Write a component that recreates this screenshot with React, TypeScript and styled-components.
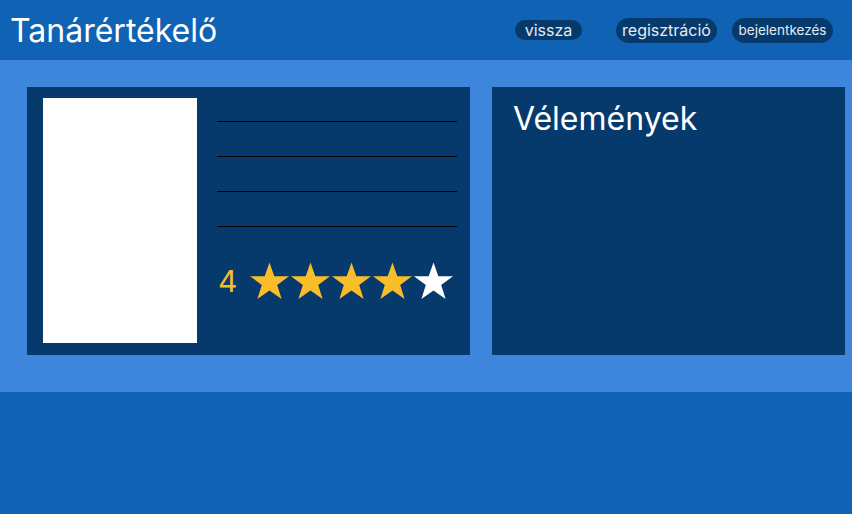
import React from "react";
import styled, { createGlobalStyle } from "styled-components";

const Global = createGlobalStyle`
  html, body { margin: 0; padding: 0; background: #0f62b4; }
  body { font-family: Inter, "Noto Sans", sans-serif; }
  * { box-sizing: border-box; }
`;

const Header = styled.header`
  height: 60px;
  background: #0f62b4;
  display: flex;
  align-items: center;
  padding: 0 19px 0 10px;
`;

const Title = styled.h1`
  margin: 0;
  flex: 1;
  font-size: 32px;
  font-weight: 400;
  color: #ffffff;
  line-height: 1;
  position: relative;
  top: 1px;
`;

const Nav = styled.nav`
  display: flex;
  align-items: center;
`;

const Pill = styled.button<{ $h: number; $fs: number; $w: number; $ml: number }>`
  height: ${(p) => p.$h}px;
  width: ${(p) => p.$w}px;
  margin-left: ${(p) => p.$ml}px;
  padding: 0;
  border: none;
  border-radius: 999px;
  background: #063a6d;
  color: #e6ebf2;
  font-family: Inter, "Noto Sans", sans-serif;
  font-size: ${(p) => p.$fs}px;
  white-space: nowrap;
  display: flex;
  align-items: center;
  justify-content: center;
`;

const Main = styled.main`
  background: #3e86db;
  display: grid;
  grid-template-columns: 443px 353px;
  column-gap: 22px;
  padding: 27px 7px 37px 27px;
`;

const Card = styled.section`
  background: #063a6d;
  height: 268px;
`;

const ProfileCard = styled(Card)`
  display: flex;
  gap: 20px;
  padding: 11px 13px 12px 16px;
`;

const Photo = styled.div`
  width: 154px;
  height: 245px;
  background: #ffffff;
`;

const Details = styled.div`
  flex: 1;
  display: flex;
  flex-direction: column;
  padding-top: 23px;
`;

const Line = styled.div`
  height: 35px;
  border-top: 1px solid #000;
`;

const Rating = styled.div`
  display: flex;
  align-items: center;
  margin-top: 1px;
  padding-left: 1px;
`;

const Score = styled.span`
  color: #f9bd2a;
  font-size: 30px;
  line-height: 1;
  margin-right: 12px;
`;

const StarSvg = styled.svg`
  display: block;
  width: 41px;
  height: 38px;
`;

const Star = ({ filled }: { filled: boolean }) => (
  <StarSvg viewBox="0 0 41 38">
    <polygon
      points="20.5,0.5 25.3,14.2 40,14.2 28.2,22.9 32.6,37 20.5,28.4 8.4,37 12.8,22.9 1,14.2 15.7,14.2"
      fill={filled ? "#f9bd2a" : "#ffffff"}
    />
  </StarSvg>
);

const ReviewCard = styled(Card)`
  padding: 13px 21px;
`;

const ReviewTitle = styled.h2`
  margin: 0;
  font-size: 32px;
  font-weight: 400;
  color: #ffffff;
  line-height: 1.2;
`;

export default function App() {
  return (
    <>
      <Global />
      <Header>
        <Title>Tanárértékelő</Title>
        <Nav>
          <Pill $h={20} $w={67} $fs={16} $ml={0}>vissza</Pill>
          <Pill $h={25} $w={101} $fs={16} $ml={34}>regisztráció</Pill>
          <Pill $h={25} $w={101} $fs={13.5} $ml={15}>bejelentkezés</Pill>
        </Nav>
      </Header>
      <Main>
        <ProfileCard>
          <Photo />
          <Details>
            <Line />
            <Line />
            <Line />
            <Line />
            <Rating>
              <Score>4</Score>
              {[1, 2, 3, 4, 5].map((i) => (
                <Star key={i} filled={i <= 4} />
              ))}
            </Rating>
          </Details>
        </ProfileCard>
        <ReviewCard>
          <ReviewTitle>Vélemények</ReviewTitle>
        </ReviewCard>
      </Main>
    </>
  );
}
